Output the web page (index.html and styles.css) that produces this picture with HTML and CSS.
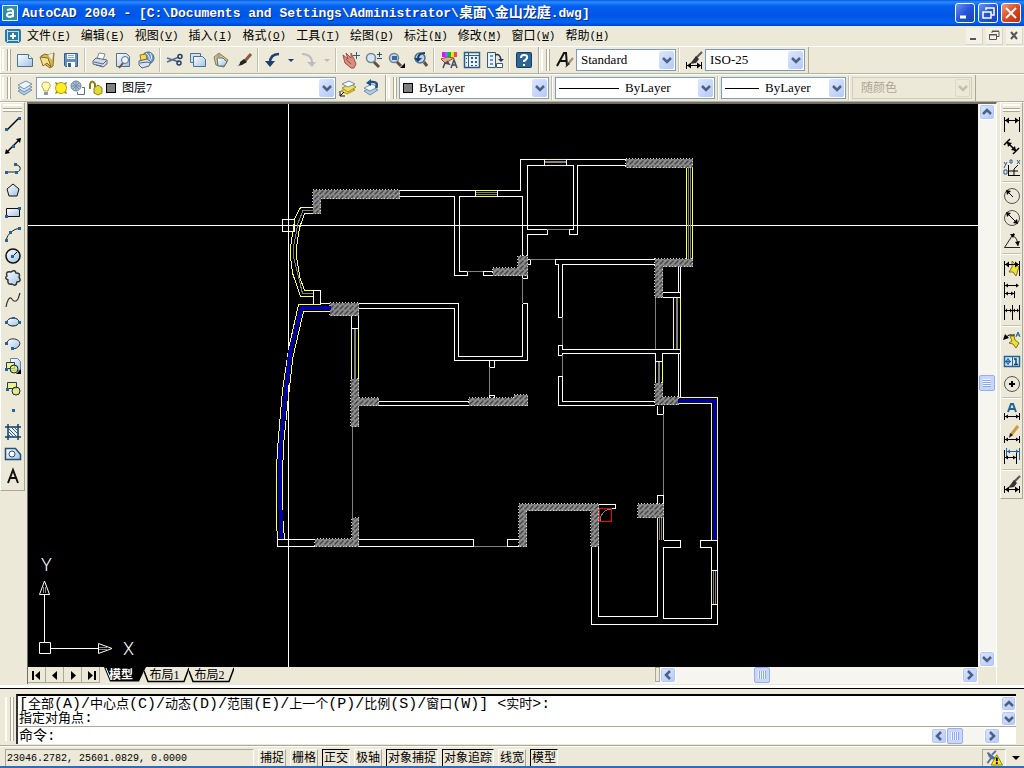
FILE: index.html
```html
<!DOCTYPE html>
<html lang="zh-CN">
<head>
<meta charset="utf-8">
<title>AutoCAD 2004</title>
<link rel="stylesheet" href="styles.css">
</head>
<body>
<svg class="defs" aria-hidden="true">
  <defs>
    <linearGradient id="sky" x1="0" y1="0" x2="1" y2="1"><stop offset="0" stop-color="#fff"/><stop offset="1" stop-color="#9fc3e6"/></linearGradient>
    <pattern id="hatch" width="5" height="5" patternUnits="userSpaceOnUse"><rect width="5" height="5" fill="#8c8c8c"/><path d="M0 4h1v1H0zM1 3h1v1H1zM2 2h1v1H2zM3 1h1v1H3z" fill="#000"/></pattern>
  </defs>
  <symbol id="new" viewBox="0 0 18 18"><path d="M1.500 3.500h11l4 4v8h-15z" fill="url(#sky)" stroke="#4c7392"/><path d="M12.500 3.500v4h4" fill="#fff" stroke="#4c7392"/></symbol>
  <symbol id="open" viewBox="0 0 18 18"><path d="M2 5l4-2 3 1 6-2-1 13-3 2-7-5z" fill="#d4b652" stroke="#8b6d29"/><path d="M1 6l8 1 3 9-4-4-4 3z" fill="#f3df8d" stroke="#8b6d29"/><path d="M9 4l5-2-1 7z" fill="#e9f0f3"/></symbol>
  <symbol id="save" viewBox="0 0 18 18"><path d="M2.500 2.500h13v13h-12l-1-1z" fill="#6790b5" stroke="#365f87"/><path d="M5 3h8v5H5z" fill="#f1f6fb"/><path d="M6 4.500h6M6 6.500h6" stroke="#91aabf"/><path d="M5 11h8v5H5z" fill="#fff"/><path d="M6 12h3v4H6z" fill="#365f87"/></symbol>
  <symbol id="print" viewBox="0 0 18 18"><path d="M6 8l2-6 6 1-2 6z" fill="#fff" stroke="#7d8aa5"/><path d="M2 10l3-3 11 2v4l-4 3-10-3z" fill="#d2d9e8" stroke="#596985"/><path d="M3 11l9 2 3-3M5 14l6 1" stroke="#596985" fill="none"/></symbol>
  <symbol id="preview" viewBox="0 0 18 18"><path d="M2.500 2.500h10l3 3v10h-13z" fill="url(#sky)" stroke="#4c7392"/><circle cx="11" cy="9" r="3.500" fill="#e8f5ff" stroke="#6d6d75"/><path d="M9 12l-4 5" stroke="#76503e" stroke-width="2"/></symbol>
  <symbol id="publish" viewBox="0 0 18 18"><circle cx="11" cy="7" r="6" fill="#6c99c4" stroke="#456b91"/><path d="M9 2q6 4 1 10M13 2q4 5-2 10" stroke="#e4f3ff" fill="none"/><path d="M3 4l6-1 1 6-6 1z" fill="#f8da48" stroke="#9a7c20"/><path d="M2 10l8-2 4 3-2 4-7 2-3-3z" fill="#dce2ed" stroke="#526486"/><path d="M3 12l7-1 3 1" stroke="#526486" fill="none"/></symbol>
  <symbol id="cut" viewBox="0 0 18 18"><path d="M1 7l12 4M1 11l12-5" stroke="#526f8f" stroke-width="1.500"/><circle cx="14" cy="5.500" r="2" fill="none" stroke="#263e64" stroke-width="1.500"/><circle cx="13" cy="12" r="2" fill="none" stroke="#263e64" stroke-width="1.500"/></symbol>
  <symbol id="copy" viewBox="0 0 18 18"><path d="M1.500 2.500h10v9h-10z" fill="#cfe0ef" stroke="#4c7392"/><path d="M4.500 5.500h9l3 3v7h-12z" fill="url(#sky)" stroke="#4c7392"/></symbol>
  <symbol id="paste" viewBox="0 0 18 18"><path d="M2 6l5-4 9 7-4 7-8-2z" fill="#dfc47b" stroke="#94763b"/><path d="M5 7h6l4 4-3 4H6z" fill="url(#sky)" stroke="#4c7392"/><path d="M4 4l4-2 1 3-4 2z" fill="#a0a3a5"/></symbol>
  <symbol id="brush" viewBox="0 0 18 18"><path d="M16 3L9 11" stroke="#885b38" stroke-width="3"/><path d="M9 8l3 3-5 3-5 1q3-1 3-4z" fill="#252525"/></symbol>
  <symbol id="undo" viewBox="0 0 18 18"><path d="M15 3Q6 3 6 12" fill="none" stroke="currentColor" stroke-width="2.500"/><path d="M1 10h10l-5 6z" fill="currentColor"/></symbol>
  <symbol id="redo" viewBox="0 0 18 18"><path d="M2 3q10 0 10 9" fill="none" stroke="currentColor" stroke-width="2"/><path d="M7 11h9l-4 5z" fill="currentColor"/></symbol>
  <symbol id="pan" viewBox="0 0 18 18"><path d="M1 4l5 4-2-6 5 5V2l3 6 2 5-2 4H9L3 12z" fill="#d98e82" stroke="#9c5049"/><path d="M14.500 1v7M11 4.500h7" stroke="#315c89"/><path d="M4 8l5 5" stroke="#9c5049"/></symbol>
  <symbol id="zoomrt" viewBox="0 0 18 18"><circle cx="6" cy="7" r="4.500" fill="#d6e7f3" stroke="#728391" stroke-width="1.500"/><path d="M9 11l5 5" stroke="#674d44" stroke-width="3"/><path d="M14.500 1v5M12 3.500h5M12 7.500h5" stroke="#254b76"/></symbol>
  <symbol id="zoomwin" viewBox="0 0 18 18"><circle cx="6" cy="7" r="4.500" fill="#c6dced" stroke="#728391" stroke-width="1.500"/><path d="M4 5h5v4H4z" fill="#356aa0"/><path d="M9 11l4 4" stroke="#674d44" stroke-width="3"/><path d="M17 12v5h-5z"/></symbol>
  <symbol id="zoomprev" viewBox="0 0 18 18"><circle cx="9" cy="7" r="5" fill="#b9d2e7" stroke="#536d85" stroke-width="1.500"/><path d="M13 11l3 4" stroke="#674d44" stroke-width="3"/><path d="M14 2Q7 2 7 8" stroke="#153f6e" stroke-width="2" fill="none"/><path d="M3 7h8l-4 4z" fill="#153f6e"/></symbol>
  <symbol id="props" viewBox="0 0 18 18"><path d="M2 1h3v5H2z" fill="#f0f"/><path d="M5 1h3v5H5z" fill="#48f"/><path d="M8 1h3v5H8z" fill="#0b4"/><path d="M11 1h3v5h-3z" fill="#fd0"/><path d="M14 1h3v5h-3z" fill="#f44"/><path d="M1 8l6-2 7 1-5 3-4 2z" fill="#e6a98c" stroke="#8e4d42"/><path d="M3 17l2-5 4 1-2-3M11 17l3-8 3 8M12 14h4" fill="none" stroke="#454e61" stroke-width="1.500"/></symbol>
  <symbol id="dc" viewBox="0 0 18 18"><path d="M1.500 1.500h15v15h-15z" fill="#e9f2f9" stroke="#325b82" stroke-width="1.500"/><path d="M5.500 2v14M2 4.500h14" stroke="#325b82"/><path d="M8 6h2v2H8zM12 6h2v2h-2zM8 10h2v2H8zM12 10h2v2h-2zM8 14h2v1H8zM12 14h2v1h-2zM3 7h1v1H3zM3 11h1v1H3z" fill="#325b82"/></symbol>
  <symbol id="palette" viewBox="0 0 18 18"><path d="M1.500 1.500h8v15h-8z" fill="#e9f2f9" stroke="#325b82"/><path d="M4 4h3v2H4zM4 8h3v2H4zM4 12h3v2H4z" fill="#7793b0"/><path d="M9 4q5-2 6 5" fill="none" stroke="#203755" stroke-width="1.500"/><path d="M12 8h6l-3 3z" fill="#203755"/><path d="M10.500 12.500h6v4h-6z" fill="#fff" stroke="#325b82"/></symbol>
  <symbol id="help" viewBox="0 0 18 18"><rect x="1.500" y="1.500" width="15" height="15" rx="1" fill="#2b6596" stroke="#173f65"/><path d="M6 7q0-3 3-3 4 0 3 3-1 2-3 3v1" fill="none" stroke="#fff" stroke-width="2"/><path d="M8 13h2v2H8z" fill="#fff"/></symbol>
  <symbol id="tstyle" viewBox="0 0 18 18"><path d="M1 15L8 2h2l1 13M4 10h7" fill="none" stroke="#111" stroke-width="2"/><path d="M17 7l-5 6" stroke="#a58b66" stroke-width="2"/><path d="M12 11l2 2-5 4z" fill="#333"/></symbol>
  <symbol id="dstyle" viewBox="0 0 18 18"><path d="M1.500 11v7M16.500 11v7M2 14.500h14" stroke="#000"/><path d="M2 14.500l4-3v6zM16 14.500l-4-3v6z"/><path d="M17 1l-6 6" stroke="#555" stroke-width="2"/><path d="M11 5l3 3-3 4-6 1z" fill="#333"/></symbol>
  <symbol id="layers" viewBox="0 0 18 18"><path d="M2 12l8-4 6 3-8 5z" fill="#b4cbe0" stroke="#7090af"/><path d="M2 9l8-4 6 3-8 5z" fill="#d7e5f1" stroke="#7090af"/><path d="M2 6l8-4 6 3-8 5z" fill="#edf5fb" stroke="#7090af"/></symbol>
  <symbol id="laycur" viewBox="0 0 18 18"><path d="M2 12l8-4 6 3-8 4z" fill="#e9d548" stroke="#a59318"/><path d="M3 9l8-4 6 3-8 5z" fill="#f0df62" stroke="#a59318"/><path d="M3 5l7-3 6 3-7 3z" fill="#f7fafc" stroke="#7090af"/><path d="M1 17l4-4M1 12v5h5" stroke="#111" fill="none"/></symbol>
  <symbol id="layprev" viewBox="0 0 18 18"><path d="M2 12l8-4 6 3-8 5z" fill="#b4cbe0" stroke="#7090af"/><path d="M2 9l8-4 6 3-8 4z" fill="#edf5fb" stroke="#7090af"/><path d="M14 9q3-7-5-6" stroke="#244f84" stroke-width="2.500" fill="none"/><path d="M9 0v7L4 4z" fill="#244f84"/></symbol>
  <symbol id="bulb" viewBox="0 0 12 16"><path d="M4 11q0-2-2-4-1-5 4-5t4 5q-2 2-2 4z" fill="#fffbb8" stroke="#c6a72d"/><path d="M4 12h4v3H4z" fill="#8e9bab"/></symbol>
  <symbol id="sun" viewBox="0 0 14 14"><path d="M1 1l3 1h6l3-1-1 3v6l1 3-3-1H4l-3 1 1-3V4z" fill="#8e8a2c"/><circle cx="7" cy="7" r="5.500" fill="#ffec25" stroke="#b8a515"/></symbol>
  <symbol id="vp" viewBox="0 0 16 16"><circle cx="6" cy="6" r="5" fill="#a9bed0" stroke="#6b8da8"/><path d="M1 6h10M6 1v10M3 3l6 6M9 3L3 9" stroke="#768fa5"/><path d="M12 7.500h2.500v7h-7V12" fill="#fff" stroke="#59738c"/></symbol>
  <symbol id="lock" viewBox="0 0 16 16"><path d="M2 9V4q2-5 5 0v4" fill="none" stroke="#878018" stroke-width="2"/><path d="M6 8l4-3 4 3v5l-4 2-4-2z" fill="#e5d934" stroke="#878018"/></symbol>
  <symbol id="line" viewBox="0 0 18 18"><path d="M3 15L15 3" stroke="#000" stroke-width="1.500"/><path d="M1 13h3v3H1zM14 2h3v3h-3z" fill="#236398"/></symbol>
  <symbol id="xline" viewBox="0 0 18 18"><path d="M2 16L16 2" stroke="#000" stroke-width="1.500"/><path d="M1 17l1-5 4 4zM17 1l-1 5-4-4z"/><path d="M8 8h3v3H8z" fill="#236398"/></symbol>
  <symbol id="pline" viewBox="0 0 18 18"><path d="M3 13h10q4-1 3-5l-4-3" fill="none" stroke="#222"/><path d="M1 12h3v3H1zM11 12h3v3h-3zM10 4h3v3h-3z" fill="#236398"/></symbol>
  <symbol id="polygon" viewBox="0 0 18 18"><path d="M9 3l6 5-2 7H5L3 8z" fill="url(#sky)" stroke="#111"/></symbol>
  <symbol id="rect" viewBox="0 0 18 18"><path d="M2.500 5.500h13v8h-13z" fill="url(#sky)" stroke="#111"/><path d="M1 12h3v3H1zM14 4h3v3h-3z" fill="#236398"/></symbol>
  <symbol id="arc" viewBox="0 0 18 18"><path d="M2 15Q5 5 16 3" fill="none" stroke="#222"/><path d="M1 14h3v3H1zM14 2h3v3h-3zM5 6h3v3H5z" fill="#236398"/></symbol>
  <symbol id="circle" viewBox="0 0 18 18"><circle cx="9" cy="9" r="7" fill="url(#sky)" stroke="#111" stroke-width="1.500"/><path d="M8 10l5-5" stroke="#111"/><path d="M7 8h3v3H7z" fill="#236398"/></symbol>
  <symbol id="cloud" viewBox="0 0 18 18"><path d="M7 3q4-3 5 1 5 0 3 4 3 5-2 5-1 5-5 2-5 1-4-4Q0 9 3 7 1 2 7 3z" fill="url(#sky)" stroke="#333" stroke-width="1.500"/></symbol>
  <symbol id="spline" viewBox="0 0 18 18"><path d="M2 16q2-10 5-9 4 6 7 1l2-6" fill="none" stroke="#333" stroke-width="1.200"/></symbol>
  <symbol id="ellipse" viewBox="0 0 18 18"><ellipse cx="9" cy="9" rx="6" ry="4" fill="url(#sky)" stroke="#111"/><path d="M1 8h3v3H1zM14 8h3v3h-3zM8 4h3v2H8z" fill="#236398"/></symbol>
  <symbol id="earc" viewBox="0 0 18 18"><path d="M3 8q1-5 8-4 7 2 4 7-2 3-7 3" fill="url(#sky)" stroke="#333"/><path d="M1 7h3v3H1zM7 12h3v3H7z" fill="#236398"/></symbol>
  <symbol id="insert" viewBox="0 0 18 18"><path d="M6.500 1.500h7l3 3v9h-10z" fill="url(#sky)" stroke="#6287a4"/><path d="M2.500 5.500h8v6h-8z" fill="#edf28a" stroke="#173f65"/><circle cx="10" cy="12" r="4" fill="#e1ea6a" fill-opacity=".7" stroke="#222"/><path d="M1 11h3v3H1z" fill="#236398"/><path d="M17 12v5h-5z"/></symbol>
  <symbol id="block" viewBox="0 0 18 18"><path d="M3.500 3.500h9v6h-9z" fill="#edf28a" stroke="#173f65"/><circle cx="12" cy="12" r="4" fill="#e1ea6a" fill-opacity=".7" stroke="#222"/><path d="M2 9h3v3H2z" fill="#236398"/></symbol>
  <symbol id="point" viewBox="0 0 18 18"><path d="M8 8h3v3H8z" fill="#236398"/></symbol>
  <symbol id="hatchi" viewBox="0 0 18 18"><path d="M4 4h10v10H4z" fill="#e5f1fc"/><path d="M4 1v16M14 1v16M1 4h16M1 14h16" stroke="#163f68" stroke-width="1.500"/><path d="M4 11l3 3M4 8l6 6M4 5l9 9M7 4l7 7M10 4l4 4" stroke="#315c89"/></symbol>
  <symbol id="region" viewBox="0 0 18 18"><path d="M1.500 3.500h10l5 6v5h-15z" fill="url(#sky)" stroke="#274f76" stroke-width="1.500"/><circle cx="8" cy="9" r="3" fill="#fff" stroke="#274f76"/></symbol>
  <symbol id="mtext" viewBox="0 0 18 18"><path d="M4 16L9 3l5 13M6 11h6" fill="none" stroke="#111" stroke-width="2"/></symbol>
  <symbol id="dlin" viewBox="0 0 18 18"><path d="M1.500 2v15M16.500 2v15M2 5.500h14" stroke="#000"/><path d="M2 5.500l4-3v6zM16 5.500l-4-3v6z"/></symbol>
  <symbol id="dali" viewBox="0 0 18 18"><path d="M1 8l6-6M10 17l6-6M4 5l9 9" stroke="#000" stroke-width="1.500" fill="none"/><path d="M4 5l5 1-4 4zM13 14l-1-5-4 4z"/></symbol>
  <symbol id="dord" viewBox="0 0 18 18"><path d="M5.500 6v11M5 16.500h12M6 12h9M11 16v-6l4-4" stroke="#000" fill="none"/><path d="M1 3l2 3M4 3L1 9M1 11h3v4H1zM14 1l3 4M17 1l-3 4M7 1h2v3H7z" stroke="#315c89" fill="none"/></symbol>
  <symbol id="drad" viewBox="0 0 18 18"><circle cx="9" cy="9" r="7.500" fill="none" stroke="#555"/><path d="M10 10L5 5" stroke="#000"/><path d="M3 3l5 1-4 4z"/></symbol>
  <symbol id="ddia" viewBox="0 0 18 18"><circle cx="9" cy="9" r="7.500" fill="none" stroke="#555"/><path d="M5 5l8 8" stroke="#000"/><path d="M3 3l5 1-4 4zM15 15l-5-1 4-4z"/></symbol>
  <symbol id="dang" viewBox="0 0 18 18"><path d="M11 2L1.500 16.500H17M9 4q6 3 6 11" fill="none" stroke="#222"/><path d="M7 3l5 0-2 4zM15 15l-3-4 5-1z"/></symbol>
  <symbol id="qdim" viewBox="0 0 18 18"><path d="M9 2l4 4 3 2-3 9-3-4-4 0 3-5z" fill="#eee135" stroke="#80751a"/><path d="M1.500 2v15M16.500 2v15M2 5.500h14" stroke="#000"/><path d="M2 5.500l4-3v6zM16 5.500l-4-3v6z"/></symbol>
  <symbol id="dbase" viewBox="0 0 18 18"><path d="M1.500 1v16M11.500 10v7M2 4.500h13M2 12.500h9" stroke="#000"/><path d="M2 4.500l3-2v4zM16 4.500l-3-2v4zM2 12.500l3-2v4zM11 12.500l-3-2v4z"/></symbol>
  <symbol id="dcont" viewBox="0 0 18 18"><path d="M1.500 2v15M9.500 2v15M16.500 2v15M2 7.500h14" stroke="#000"/><path d="M2 7.500l2-2v4zM9 7.500l-2-2v4zM10 7.500l2-2v4zM16 7.500l-2-2v4z"/></symbol>
  <symbol id="leader" viewBox="0 0 18 18"><path d="M7 5l4 0 1 4 4 3-3 5-3-4-4-1 3-2z" fill="#eee135" stroke="#80751a"/><path d="M2 7l4-3h6" stroke="#000" fill="none"/><path d="M0 9l2-6 4 4z"/><path d="M13 6l2-5 2 5M13 4h4" stroke="#236398" fill="none"/></symbol>
  <symbol id="tol" viewBox="0 0 18 18"><path d="M1.500 3.500h15v10h-15z" fill="#d5e9f7" stroke="#236398" stroke-width="1.500"/><path d="M9.500 3v11M5 5v7M2 8.500h6" stroke="#236398"/><circle cx="5" cy="8.500" r="2" fill="none" stroke="#236398"/><path d="M11 6h2v5M11 11.500h4" stroke="#163f68" fill="none" stroke-width="1.500"/></symbol>
  <symbol id="center" viewBox="0 0 18 18"><circle cx="9" cy="9" r="7.500" fill="none" stroke="#555"/><path d="M9 6v6M6 9h6" stroke="#000" stroke-width="2"/></symbol>
  <symbol id="dimedit" viewBox="0 0 18 18"><path d="M5 9l3-8h2l3 8M6 6h6" stroke="#236398" fill="none" stroke-width="2"/><path d="M1.500 10v7M16.500 10v7M2 13.500h14" stroke="#000"/><path d="M2 13.500l3-2v4zM16 13.500l-3-2v4z"/></symbol>
  <symbol id="dimtext" viewBox="0 0 18 18"><path d="M15 1L8 10" stroke="#d19a3b" stroke-width="3"/><path d="M7 8l3 2-4 3z" fill="#222"/><path d="M1.500 11v7M16.500 11v7M2 14.500h14" stroke="#000"/><path d="M2 14.500l3-2v4zM16 14.500l-3-2v4z"/></symbol>
  <symbol id="dimup" viewBox="0 0 18 18"><path d="M3.500 1v10M16.500 1v12M4 4.500h12" stroke="#236398"/><path d="M4 4.500l3-2v4zM16 4.500l-3-2v4z" fill="#236398"/><path d="M1.500 3v14M13.500 6v11M2 10.500h11" stroke="#000"/><path d="M2 10.500l3-2v4zM13 10.500l-3-2v4z"/></symbol>
  <symbol id="chev" viewBox="0 0 10 8"><path d="M1 2l4 4 4-4" fill="none" stroke="currentColor" stroke-width="2.500"/></symbol>
</svg>

<div class="app">
  <header class="title">
    <svg class="applogo" viewBox="0 0 16 16"><path d="M.5.5h15v15H.5z" fill="#2a8fa6" stroke="#e7f7ff"/><path d="M5 5q6-2 6 1v6M11 8q-6-1-6 2t6 1" fill="none" stroke="#fff" stroke-width="2"/></svg>
    <h1><span class="lat">AutoCAD 2004 - [C:\Documents and Settings\Administrator\</span>桌面<span class="lat">\</span>金山龙庭<span class="lat">.dwg]</span></h1>
    <button class="win" aria-label="最小化"><svg viewBox="0 0 18 18"><path d="M4 13h6" stroke="#fff" stroke-width="3"/></svg></button>
    <button class="win" aria-label="还原"><svg viewBox="0 0 18 18"><path d="M7 6V4h8v7h-3M4 8h8v6H4z" fill="none" stroke="#fff" stroke-width="1.500"/></svg></button>
    <button class="win close" aria-label="关闭"><svg viewBox="0 0 18 18"><path d="M4 4l10 10M14 4L4 14" stroke="#fff" stroke-width="2"/></svg></button>
  </header>

  <nav class="menu">
    <svg class="doclogo" viewBox="0 0 18 16"><path d="M1 2l2-1h13l1 2v10l-2 2H3l-2-2z" fill="#2b78a0"/><path d="M3.500 2v12M14.500 3v11M3 3.500h12M3 12.500h12" stroke="#b2e0f5"/><path d="M9 5v6M6 8h6" stroke="#fff" stroke-width="2"/></svg>
    <button>文件<span>(<u>F</u>)</span></button><button>编辑<span>(<u>E</u>)</span></button><button>视图<span>(<u>V</u>)</span></button><button>插入<span>(<u>I</u>)</span></button><button>格式<span>(<u>O</u>)</span></button><button>工具<span>(<u>T</u>)</span></button><button>绘图<span>(<u>D</u>)</span></button><button>标注<span>(<u>N</u>)</span></button><button>修改<span>(<u>M</u>)</span></button><button>窗口<span>(<u>W</u>)</span></button><button>帮助<span>(<u>H</u>)</span></button>
    <div class="mdi">
      <button aria-label="最小化文档"><svg viewBox="0 0 16 16"><path d="M4 11h6" stroke="#555" stroke-width="2"/></svg></button>
      <button aria-label="还原文档"><svg viewBox="0 0 16 16"><path d="M6 5V3.500h7v5h-2M3.500 7h7v4.500h-7zM3 6.500h8M6 3h7" fill="none" stroke="#555"/></svg></button>
      <button aria-label="关闭文档"><svg viewBox="0 0 16 16"><path d="M5 4l6 7M11 4l-6 7" stroke="#555" stroke-width="2"/></svg></button>
    </div>
  </nav>

  <div class="row">
    <div class="panel">
      <i class="grip"></i>
      <button class="tb" aria-label="新建"><svg><use href="#new"/></svg></button><button class="tb" aria-label="打开"><svg><use href="#open"/></svg></button><button class="tb" aria-label="保存"><svg><use href="#save"/></svg></button><i class="sep"></i>
      <button class="tb" aria-label="打印"><svg><use href="#print"/></svg></button><button class="tb" aria-label="预览"><svg><use href="#preview"/></svg></button><button class="tb" aria-label="发布"><svg><use href="#publish"/></svg></button><i class="sep"></i>
      <button class="tb" aria-label="剪切"><svg><use href="#cut"/></svg></button><button class="tb" aria-label="复制"><svg><use href="#copy"/></svg></button><button class="tb" aria-label="粘贴"><svg><use href="#paste"/></svg></button><button class="tb" aria-label="特性匹配"><svg><use href="#brush"/></svg></button><i class="sep"></i>
      <button class="tb undo" aria-label="放弃"><svg><use href="#undo"/></svg></button><button class="drop" aria-label="放弃列表"></button><button class="tb redo" aria-label="重做"><svg><use href="#redo"/></svg></button><button class="drop off" aria-label="重做列表"></button><i class="sep"></i>
      <button class="tb" aria-label="平移"><svg><use href="#pan"/></svg></button><button class="tb" aria-label="实时缩放"><svg><use href="#zoomrt"/></svg></button><button class="tb" aria-label="窗口缩放"><svg><use href="#zoomwin"/></svg></button><button class="tb" aria-label="上一个缩放"><svg><use href="#zoomprev"/></svg></button><i class="sep"></i>
      <button class="tb" aria-label="特性"><svg><use href="#props"/></svg></button><button class="tb" aria-label="设计中心"><svg><use href="#dc"/></svg></button><button class="tb" aria-label="工具选项板"><svg><use href="#palette"/></svg></button><i class="sep"></i>
      <button class="tb" aria-label="帮助"><svg><use href="#help"/></svg></button>
    </div>
    <div class="panel">
      <i class="grip"></i>
      <button class="tb style" aria-label="文字样式"><svg><use href="#tstyle"/></svg></button>
      <label class="combo w100"><select aria-label="文字样式"><option>Standard</option></select><b><svg><use href="#chev"/></svg></b></label><i class="sep"></i>
      <button class="tb" aria-label="标注样式"><svg><use href="#dstyle"/></svg></button>
      <label class="combo w100"><select aria-label="标注样式"><option>ISO-25</option></select><b><svg><use href="#chev"/></svg></b></label>
    </div>
  </div>

  <div class="row">
    <div class="panel">
      <i class="grip"></i>
      <button class="tb" aria-label="图层特性管理器"><svg><use href="#layers"/></svg></button>
      <label class="combo w300 layer"><select aria-label="图层"><option>图层7</option></select><span class="deco"><svg class="i12"><use href="#bulb"/></svg><svg class="i14"><use href="#sun"/></svg><svg class="i16"><use href="#vp"/></svg><svg class="i16"><use href="#lock"/></svg><i class="swatch"></i></span><b><svg><use href="#chev"/></svg></b></label>
      <button class="tb" aria-label="置为当前"><svg><use href="#laycur"/></svg></button><button class="tb" aria-label="上一个图层"><svg><use href="#layprev"/></svg></button>
    </div>
    <div class="panel props">
      <i class="grip"></i>
      <label class="combo w150 color"><select aria-label="颜色"><option>ByLayer</option></select><span class="deco"><i class="swatch"></i></span><b><svg><use href="#chev"/></svg></b></label><i class="sep"></i>
      <label class="combo w160 ltype"><select aria-label="线型"><option>ByLayer</option></select><span class="deco"><i class="rule"></i></span><b><svg><use href="#chev"/></svg></b></label><i class="sep"></i>
      <label class="combo w125 lweight"><select aria-label="线宽"><option>ByLayer</option></select><span class="deco"><i class="rule"></i></span><b><svg><use href="#chev"/></svg></b></label><i class="sep"></i>
      <label class="combo w120 disabled"><select aria-label="打印样式" disabled><option>随颜色</option></select><b><svg><use href="#chev"/></svg></b></label>
    </div>
  </div>

  <main class="work">
    <div class="side left">
      <i class="hgrip"></i>
      <button aria-label="直线"><svg><use href="#line"/></svg></button><button aria-label="构造线"><svg><use href="#xline"/></svg></button><button aria-label="多段线"><svg><use href="#pline"/></svg></button><button aria-label="正多边形"><svg><use href="#polygon"/></svg></button><button aria-label="矩形"><svg><use href="#rect"/></svg></button><button aria-label="圆弧"><svg><use href="#arc"/></svg></button><button aria-label="圆"><svg><use href="#circle"/></svg></button><button aria-label="修订云线"><svg><use href="#cloud"/></svg></button><button aria-label="样条曲线"><svg><use href="#spline"/></svg></button><button aria-label="椭圆"><svg><use href="#ellipse"/></svg></button><button aria-label="椭圆弧"><svg><use href="#earc"/></svg></button><button aria-label="插入块"><svg><use href="#insert"/></svg></button><button aria-label="创建块"><svg><use href="#block"/></svg></button><button aria-label="点"><svg><use href="#point"/></svg></button><button aria-label="图案填充"><svg><use href="#hatchi"/></svg></button><button aria-label="面域"><svg><use href="#region"/></svg></button><button aria-label="多行文字"><svg><use href="#mtext"/></svg></button>
    </div>

    <section class="doc">
      <div class="view">
        <svg class="plan" role="img" aria-label="户型平面图">
          <g transform="translate(-28 -104)" fill="none" shape-rendering="crispEdges">
            <path class="w" d="M0 225.500H4000M288.500 0V3000"/>
            <path class="w" d="M294.500 219.500h-12v12h12zM283 225.500h11"/>
            <path class="h" transform="translate(-.5 -.5)" d="M313 190H400V199H321V214H313zM493 268H518V256H528V276H493zM330 303H359V316H330zM351 379h8v19h20v8h-20v21h-8zM469 398h45v-3h14v11h-59zM352 518h7v29h-44v-8h37zM519 504h80v43h-8v-36h-64v36h-8zM638 504h26v14h-26zM626 159h67v9h-67zM655 259h38v8h-30v31h-8zM655 383h8v14h16v8h-24z"/>
            <path class="w" d="M400 190.500H520.500V159.500H626M400 196.500H454.500V275.500H467.500V271.500H459.500V196.500H522.500V256M493 271.500h-9.500v4h9.500M522.500 276v2.500h5V276M522.500 303.500h5V360.500H454.500V308.500H359M320.500 303.500H330M359 303.500H458.500V356.500H522.500V303.500M313.500 304V290.500H320.500V303.500M351.500 316V328.500H358.500V316M379 401.500H469M379 405.500H469M489.500 361v6.500h5V361M489.500 398v-2.500h5v2.500"/>
            <path class="w" d="M315 539.500H277.500V546.500H315M359 539.500H473.500V546.500H359M519 539.500H507.500V546.500H519M599 504.500H615.500V508.500H599"/>
            <path class="w" d="M657.500 540V616.500H598.500V547M591.500 547V624.500H717.500V540.500H700.500V547.500H711.500V618.500H663.500V547.500H680.500V540.500H663.500M711.500 570.500h6M711.500 604.500h6M657.500 406v8.500h6V406M657.500 504v-8.500h6v8.500"/>
            <path class="w" d="M547.500 229.500H527.500V165.500H573.500V229.500H569.500V234.500H577.500V165.500H626M547.500 229.500V234.500H527.500V256M544.500 160v6M566.500 160v6M475.500 191v6M497.500 191v6M527.500 264.500h3v-5h-3M655 259.500H555.500V264.500H558.500V317.500H562.500V264.500H655M680.500 349.500H562.500V345.500H558.500V355.500H562.500V353.500H655.500V361.500H662.500V353.500H680.500M678.500 353V397M680.500 349V397M655 401.500H562.500V376.500H558.500V405.500H655M663 292.500H680.500M663 297.500H680.500V267M678.500 267V292"/>
            <path class="g" d="M467 271.500h16M522.500 278V303M489.500 367V395M352.500 427V518M474 546.500H507M663.500 414V495M547 229.500H569M530 259.500H555M562.500 317V345M562.500 355V376M655.500 298V349M659.500 518V540M661.500 518V540M713.500 571V604M715.500 571V604M688.500 168V259M690.500 168V259M313 210.500H303L298 223L293.500 247V257L302.500 293.500H313M355.500 329V379M354.500 329V379M545 161.500h21M545 162.500h21M476 192.500h21M476 194.500h21M676.500 298V349M677.500 298V349M658.500 362V383M659.500 362V383"/>
            <path class="y" d="M313 207.500H300.500L295 218L290.500 247V257L292.500 273L300.500 296.500H313M313 213.500H304.500L299.500 228L296.500 247V257L300 278L304.500 290.500H313M351.500 329V379M358.500 329V379M545 159.500h21M545 165.500h21M476 190.500h21M476 196.500h21M686.500 168V259M692.500 168V259M673.500 298V349M680.500 298V349M655.500 362V383M662.500 362V383M657.500 518V540M663.500 518V540M711.500 571V604M717.500 571V604M679 397.500H717.500V540M679 403.500H711.500V540"/>
            <path class="y" d="M321 304.500H298.500L289 347L282.500 390L278 443L276.500 467V523L277.500 539M330 311.500H303.500L293 357L289.500 387L284 440L282.500 470V515L284.500 539"/>
            <path class="b" d="M331 308H301.500L290 352L285.500 395L280.500 445L279.500 480L281.500 539M678 400.500H714.500V540"/>
            <path class="g" d="M600 521q1-11 11-12"/><path class="r" d="M599.500 508.500h12v13h-12z"/>
          </g>
        </svg>
        <svg class="ucs" viewBox="36 548 112 116" role="img" aria-label="UCS">
          <g fill="none" stroke="#fff"><path d="M39.500 642.500h11v11h-11zM44.500 642V594.500M51 648.500H98.500M39.500 594.500h10L44.500 581zM98.500 643.500v10L112 648.500z"/><path d="M43.500 593v-6M45.500 593v-6M99 647.500h8M99 649.500h8" stroke="#888"/></g>
          <text x="41" y="571">Y</text><text x="123" y="655">X</text>
        </svg>
      </div>
      <div class="vs"><button class="sb" aria-label="向上滚动"><svg class="up"><use href="#chev"/></svg></button><i class="thumb v"></i><button class="sb" aria-label="向下滚动"><svg><use href="#chev"/></svg></button></div>
      <div class="tabs">
        <button class="nav" aria-label="第一个"><svg viewBox="0 0 18 16"><path d="M5 4v9" stroke="#000" stroke-width="2"/><path d="M12 4v9L7 8.500z"/></svg></button><button class="nav" aria-label="上一个"><svg viewBox="0 0 18 16"><path d="M11 4v9L6 8.500z"/></svg></button><button class="nav" aria-label="下一个"><svg viewBox="0 0 18 16"><path d="M7 4v9l5-4.500z"/></svg></button><button class="nav" aria-label="最后一个"><svg viewBox="0 0 18 16"><path d="M6 4v9l5-4.500z"/><path d="M13 4v9" stroke="#000" stroke-width="2"/></svg></button>
        <button class="tab on"><svg viewBox="0 0 45 16"><path d="M2 0l6 14.500h29L44 0z" fill="#000"/><path d="M4 1l5 12" stroke="#fff"/></svg><span>模型</span></button><button class="tab"><svg viewBox="0 0 45 16"><path d="M0 4l4 10.500h36L45 1" fill="none" stroke="#000" stroke-width="1.500"/></svg><span>布局1</span></button><button class="tab"><svg viewBox="0 0 45 16"><path d="M0 4l4 10.500h36L45 1" fill="none" stroke="#000" stroke-width="1.500"/></svg><span>布局2</span></button>
        <div class="hs"><i class="split"></i><button class="sb" aria-label="向左滚动"><svg class="lt"><use href="#chev"/></svg></button><i class="thumb h"></i><button class="sb" aria-label="向右滚动"><svg class="rt"><use href="#chev"/></svg></button></div>
      </div>
      <div class="corner"></div>
    </section>

    <div class="side right">
      <i class="hgrip"></i>
      <button aria-label="线性标注"><svg><use href="#dlin"/></svg></button><button aria-label="对齐标注"><svg><use href="#dali"/></svg></button><button aria-label="坐标标注"><svg><use href="#dord"/></svg></button><i class="hsep"></i><button aria-label="半径标注"><svg><use href="#drad"/></svg></button><button aria-label="直径标注"><svg><use href="#ddia"/></svg></button><button aria-label="角度标注"><svg><use href="#dang"/></svg></button><i class="hsep"></i><button aria-label="快速标注"><svg><use href="#qdim"/></svg></button><button aria-label="基线标注"><svg><use href="#dbase"/></svg></button><button aria-label="连续标注"><svg><use href="#dcont"/></svg></button><i class="hsep"></i><button aria-label="快速引线"><svg><use href="#leader"/></svg></button><button aria-label="公差"><svg><use href="#tol"/></svg></button><button aria-label="圆心标记"><svg><use href="#center"/></svg></button><i class="hsep"></i><button aria-label="编辑标注"><svg><use href="#dimedit"/></svg></button><button aria-label="编辑标注文字"><svg><use href="#dimtext"/></svg></button><button aria-label="标注更新"><svg><use href="#dimup"/></svg></button><i class="hsep"></i><button aria-label="标注样式管理"><svg><use href="#dstyle"/></svg></button>
    </div>
  </main>

  <section class="cmd">
    <i class="grip"></i>
    <div class="cmdbox">
      <div class="hist">
        <div class="log"><p><span>[</span>全部<span>(A)/</span>中心点<span>(C)/</span>动态<span>(D)/</span>范围<span>(E)/</span>上一个<span>(P)/</span>比例<span>(S)/</span>窗口<span>(W)] &lt;</span>实时<span>&gt;:</span></p><p>指定对角点<span>:</span></p></div>
        <div class="cv"><button class="sb" aria-label="历史向上"><svg class="up"><use href="#chev"/></svg></button><button class="sb" aria-label="历史向下"><svg><use href="#chev"/></svg></button></div>
      </div>
      <div class="entry"><label for="c">命令:</label><input id="c" type="text"><div class="ch"><button class="sb" aria-label="命令向左"><svg class="lt"><use href="#chev"/></svg></button><i class="thumb h"></i><button class="sb" aria-label="命令向右"><svg class="rt"><use href="#chev"/></svg></button></div></div>
    </div>
  </section>

  <footer class="status">
    <output>23046.2782, 25601.0829, 0.0000</output>
    <button>捕捉</button><button>栅格</button><button class="on">正交</button><button>极轴</button><button class="on">对象捕捉</button><button class="on">对象追踪</button><button>线宽</button><button class="on">模型</button>
    <span class="tray"><svg viewBox="0 0 22 17"><path d="M5 3q1 7 8 6M4 14l5-7M4 3l8 6M9 5l4-4" fill="none" stroke="#526f9a" stroke-width="2"/><path d="M14 5l6 11H8z" fill="#ffe821" stroke="#8c7d10"/><path d="M14 8v4M14 13v2" stroke="#000" stroke-width="2"/></svg></span>
    <button class="more" aria-label="状态栏菜单"></button>
  </footer>
</div>
</body>
</html>
```
FILE: styles.css
```css
* { box-sizing: border-box; }
body { margin: 0; background: #ece9d8; color: #000; font: 12px/16px "Liberation Serif", "Noto Sans CJK SC", serif; }
button { margin: 0; padding: 0; border: 0; background: none; color: inherit; font: inherit; }
i { font-style: normal; flex: none; }
svg { display: block; }
.defs { position: absolute; width: 0; height: 0; }
.app { display: flex; flex-direction: column; height: 100vh; overflow: hidden; border-bottom: 2px solid #2c6bc8; }

.title { display: flex; align-items: center; gap: 3px; height: 26px; flex: none; padding: 0 3px 0 2px; background: linear-gradient(#0a5be0, #2a8bff 8%, #0560ee 22%, #0055e5 60%, #0063f5 85%, #0045c4); color: #fff; }
.title h1 { flex: 1; margin: 0; font: bold 14px/20px "Liberation Mono", "Noto Sans CJK SC", monospace; white-space: nowrap; text-shadow: 1px 1px #0a2c80; }
.title .lat { font-size: 13px; white-space: pre; }
.applogo { width: 16px; height: 16px; margin-right: 1px; }
.win { width: 20px; height: 20px; border: 1px solid #fff; border-radius: 3px; background: linear-gradient(135deg, #6b93f0, #2355d8 50%, #1943b8); }
.win.close { background: linear-gradient(135deg, #f09a7c, #dc4a24 50%, #b92d10); }

.menu { display: flex; align-items: center; flex: none; height: 20px; padding-left: 4px; }
.doclogo { width: 18px; height: 16px; }
.menu > button { display: flex; padding: 0 5px; white-space: nowrap; }
.menu > button span { font: 11px/16px "Liberation Mono", monospace; }
.mdi { display: flex; gap: 3px; margin-left: auto; padding-right: 1px; }
.mdi button { width: 17px; height: 17px; background: #f4f2e8; border-right: 1px solid #d8d4c2; border-bottom: 1px solid #d8d4c2; }

.row { display: flex; flex: none; height: 28px; border-top: 1px solid #fff; border-bottom: 1px solid #b5b19f; }
.panel { display: flex; align-items: center; padding: 0 3px 0 1px; border-right: 1px solid #aca899; border-left: 1px solid #fff; }
.grip { width: 8px; height: 22px; margin-right: 3px; border: solid #fffdf5; border-width: 0 2px; box-shadow: 1px 0 #aca899, inset -1px 0 #aca899; }
.tb { width: 23px; height: 22px; flex: none; display: grid; place-items: center; }
.tb svg { width: 18px; height: 18px; }
.undo { color: #1d3f74; }
.redo { color: #b9bcc4; }
.style { margin-left: 1px; }
.drop { width: 13px; height: 22px; display: grid; place-items: center; }
.drop::before { content: ""; border: 3px solid transparent; border-top-color: #1d3f74; border-bottom: 0; }
.drop.off::before { border-top-color: #b9bcc4; }
.sep { width: 6px; height: 24px; background: linear-gradient(90deg, transparent 2px, #c5c1ae 2px, #c5c1ae 3px, #fff 3px, #fff 4px, transparent 4px); }

.combo { position: relative; display: block; flex: none; height: 22px; }
.combo select { appearance: none; width: 100%; height: 100%; padding: 0 20px 0 4px; border: 1px solid #7f9db9; border-radius: 0; background: #fff; color: #000; font: 13px/16px "Liberation Serif", "Noto Sans CJK SC", serif; }
.combo b { position: absolute; right: 2px; top: 2px; bottom: 2px; width: 15px; display: grid; place-items: center; border-radius: 2px; background: linear-gradient(135deg, #dce6ff, #b5c9f7); color: #4d6185; pointer-events: none; }
.combo b svg { width: 10px; height: 8px; }
.deco { position: absolute; left: 4px; top: 0; height: 100%; display: flex; align-items: center; gap: 2px; pointer-events: none; }
.swatch { width: 10px; height: 10px; border: 1px solid #000; background: #808080; }
.rule { height: 1px; background: #000; }
.i12 { width: 12px; height: 16px; }
.i14 { width: 14px; height: 14px; }
.i16 { width: 16px; height: 16px; }
.w100 { width: 100px; }
.w120 { width: 120px; }
.w125 { width: 125px; }
.w150 { width: 150px; }
.w160 { width: 160px; }
.w300 { width: 300px; }
.layer select { padding-left: 85px; font-size: 12px; }
.color select { padding-left: 19px; }
.ltype select { padding-left: 69px; }
.ltype .rule { width: 60px; }
.lweight select { padding-left: 43px; }
.lweight .rule { width: 34px; }
.disabled select { padding-left: 8px; background: #ece9d8; border-color: #d0cdbd; color: #aca899; font-size: 12px; opacity: 1; }
.disabled b { background: #ece9d8; border: 1px solid #dcd9ca; color: #c3c0b0; }

.work { flex: 1; display: flex; min-height: 0; }
.side { align-self: flex-start; flex: none; display: flex; flex-direction: column; border: 1px solid #fff; border-right-color: #aca899; border-bottom-color: #aca899; padding-bottom: 3px; }
.side.left { width: 25px; margin-right: 2px; }
.side.right { width: 23px; margin: 0 1px 0 3px; }
.side button { height: 22px; display: grid; place-items: center; }
.side svg { width: 18px; height: 18px; }
.hgrip { height: 7px; margin: 1px 2px 2px; border: solid #fffdf5; border-width: 2px 0; box-shadow: 0 1px #aca899, inset 0 -1px #aca899; }
.hsep { height: 6px; margin: 0 1px; background: linear-gradient(transparent 2px, #c5c1ae 2px, #c5c1ae 3px, #fff 3px, #fff 4px, transparent 4px); }

.doc { flex: 1; min-width: 0; display: grid; grid-template: 1fr 17px / 1fr 18px; border-top: 2px solid #716f64; border-left: 1px solid #716f64; border-right: 1px solid #fff; }
.view { position: relative; overflow: hidden; background: #000; }
.plan { position: absolute; inset: 0; width: 100%; height: 100%; }
.w { stroke: #fff; }
.g { stroke: #808080; }
.y { stroke: #ffff54; }
.b { stroke: #0000a8; stroke-width: 4; }
.r { stroke: #f00; }
.h { fill: url(#hatch); stroke: #d0d0d0; stroke-dasharray: 1 2; }
.ucs { position: absolute; left: 8px; bottom: 3px; width: 112px; height: 116px; }
.ucs text { fill: #fff; font: 300 18px "Roboto", sans-serif; }

.vs, .hs, .cv, .ch { display: flex; background: #f6f5ef; }
.vs { flex-direction: column; justify-content: space-between; align-items: center; }
.vs .thumb { margin-bottom: 6px; }
.sb { width: 16px; height: 16px; flex: none; display: grid; place-items: center; border: 1px solid #fff; border-radius: 3px; background: linear-gradient(135deg, #dce6ff, #b5c9f7); box-shadow: inset 0 0 0 1px #b4c8f6; color: #4d6185; }
.sb:last-child { margin-left: auto; }
.sb svg { width: 10px; height: 8px; }
.vs .sb, .cv .sb { margin-left: 0; }
.up { transform: rotate(180deg); }
.lt { transform: rotate(90deg); }
.rt { transform: rotate(-90deg); }
.thumb { width: 16px; height: 16px; border: 1px solid #98b0e8; border-radius: 2px; }
.thumb.v { background: repeating-linear-gradient(#eef4fe 0 1px, #8caae8 1px 2px) center / 8px 8px no-repeat #c8d6fb; }
.thumb.h { background: repeating-linear-gradient(90deg, #eef4fe 0 1px, #8caae8 1px 2px) center / 8px 8px no-repeat #c8d6fb; }
.tabs { display: flex; }
.nav { width: 18px; height: 16px; border-right: 1px solid #aca899; border-bottom: 1px solid #aca899; }
.nav svg { width: 18px; height: 16px; }
.tab { position: relative; width: 45px; height: 16px; padding-right: 4px; line-height: 14px; }
.nav + .tab { margin-left: 2px; }
.tab svg { position: absolute; inset: 0; width: 45px; height: 16px; }
.tab span { position: relative; }
.tab.on { width: 42px; color: #fff; font-weight: bold; }
.hs { width: 34%; margin-left: auto; }
.hs .thumb { margin-left: 24%; }
.split { width: 5px; height: 15px; border: 1px solid #aca899; background: #ece9d8; }
.corner { background: #ece9d8; }

.cmd { display: flex; flex: none; margin-top: 4px; padding: 5px 8px 1px 5px; border-top: 1px solid #000; border-bottom: 1px solid #aca899; box-shadow: 0 -3px #fff; }
.cmd .grip { height: 44px; align-self: center; }
.cmdbox { flex: 1; min-width: 0; border-top: 2px solid #000; border-left: 2px solid #333; background: #fff; }
.hist { display: flex; height: 31px; border-bottom: 1px solid #aca899; }
.log { flex: 1; min-width: 0; font: 13px/14px "Noto Sans CJK SC", sans-serif; }
.log p { margin: 0; padding-left: 1px; white-space: nowrap; height: 14px; }
.log span { font: 15px/14px "Liberation Mono", monospace; }
.cv { flex-direction: column; width: 15px; }
.cv .sb { width: 15px; height: 15px; }
.entry { display: flex; align-items: center; height: 17px; font: 14px/16px "Liberation Mono", "Noto Sans CJK SC", monospace; }
.entry label { padding-left: 1px; }
.entry input { flex: 1; min-width: 0; height: 16px; border: 0; padding: 0 4px; outline: 0; font: inherit; background: none; }
.ch { width: 69px; margin-right: 16px; }

.status { display: flex; align-items: center; gap: 4px; flex: none; height: 20px; padding: 2px 2px 0 5px; border-top: 1px solid #fff; }
.status output { width: 249px; height: 17px; padding: 0 1px; border: 1px solid #aca899; border-right-color: #fff; border-bottom: 0; font: 10px/17px "Liberation Mono", monospace; white-space: nowrap; }
.status button { height: 17px; padding: 0 1px; border: 1px solid #fff; border-right-color: #aca899; border-bottom: 0; white-space: nowrap; }
.status button.on { border-color: #000 #fff #fff #000; }
.tray { margin-left: auto; border: 1px solid #aca899; border-right-color: #fff; border-bottom: 0; }
.tray svg { width: 22px; height: 16px; }
.status .more { width: 12px; border: 0; display: grid; place-items: center; }
.more::before { content: ""; border: 4px solid transparent; border-top-color: #000; border-bottom: 0; }
```
